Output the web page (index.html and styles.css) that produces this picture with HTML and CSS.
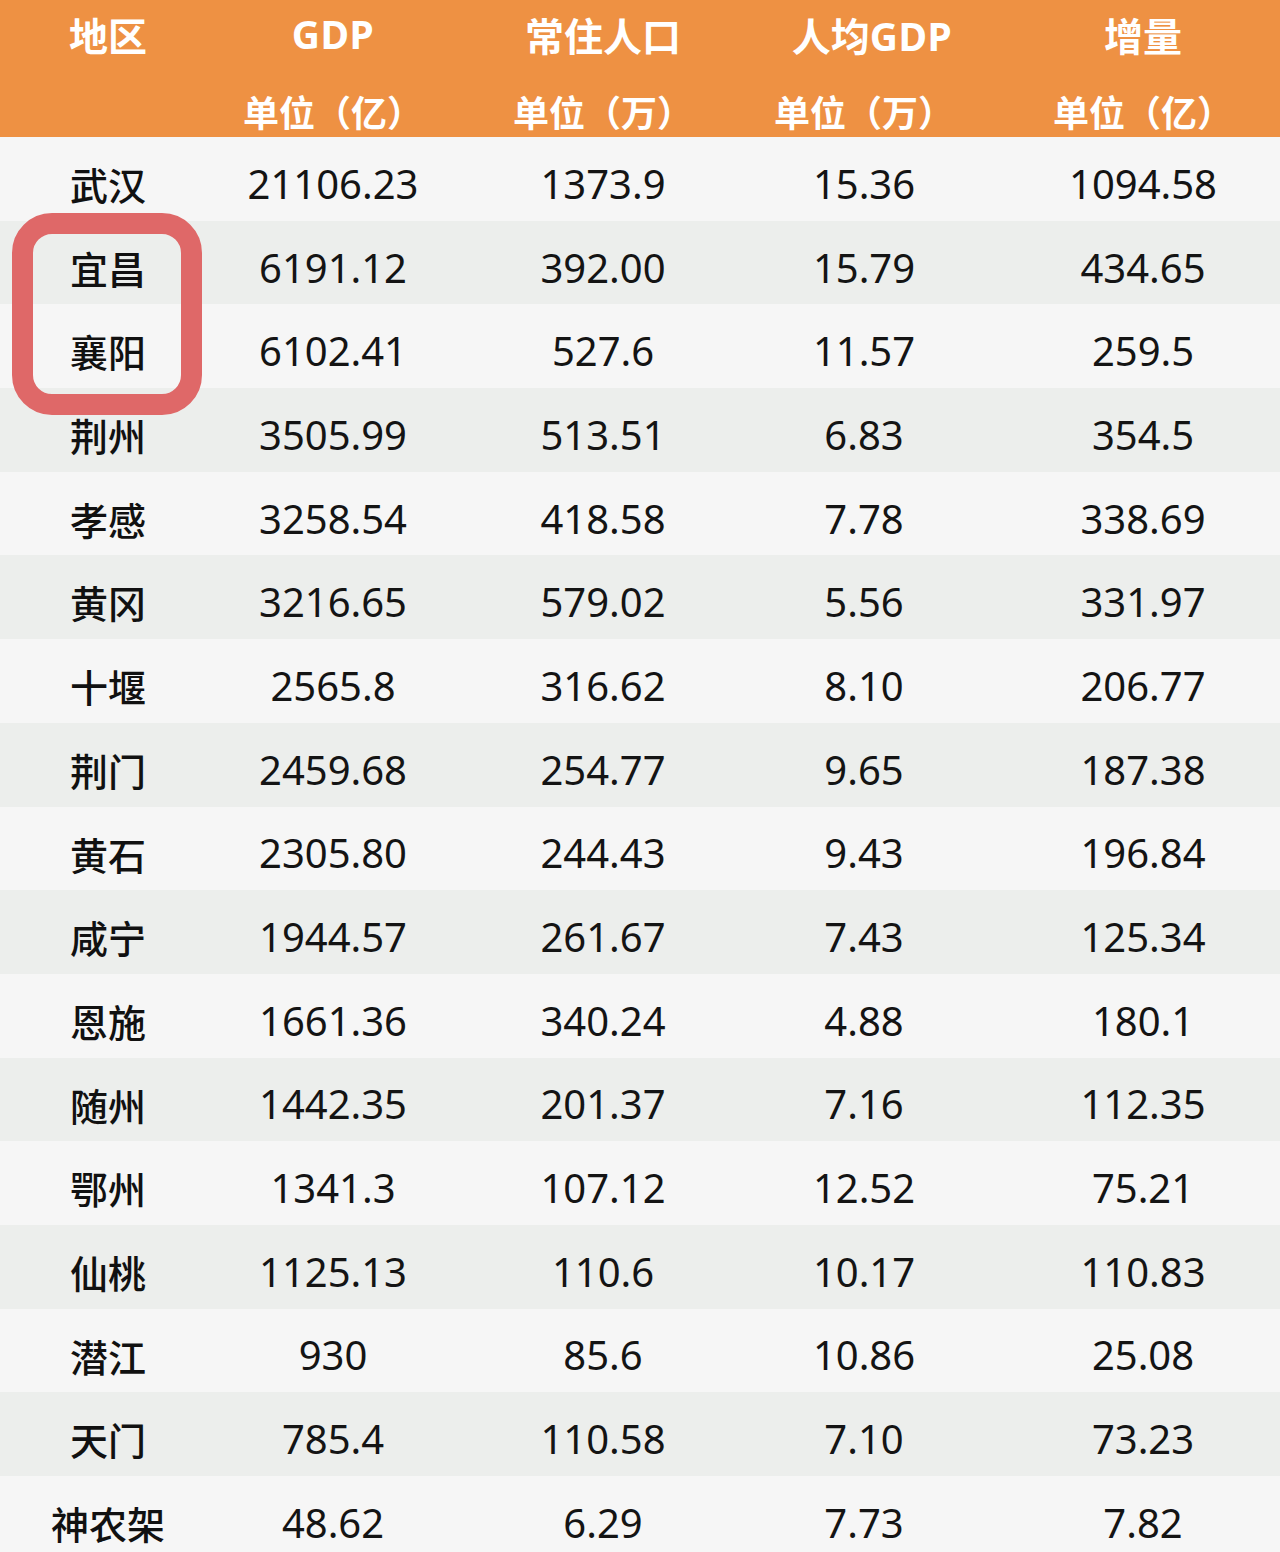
FILE: index.html
```html
<!DOCTYPE html>
<html lang="zh-CN">
<head>
<meta charset="utf-8">
<title>湖北各地区GDP</title>
<link rel="stylesheet" href="styles.css">
</head>
<body>
<div class="page">
  <div class="table">
    <div class="head">
      <div class="hcell"><div class="l1">地区</div><div class="l2"></div></div>
      <div class="hcell"><div class="l1 latin">GDP</div><div class="l2">单位（亿）</div></div>
      <div class="hcell"><div class="l1">常住人口</div><div class="l2">单位（万）</div></div>
      <div class="hcell shift"><div class="l1">人均<span class="latin">GDP</span></div><div class="l2 unshift">单位（万）</div></div>
      <div class="hcell last"><div class="l1">增量</div><div class="l2">单位（亿）</div></div>
    </div>
    <div class="row"><div class="c name">武汉</div><div class="c">21106.23</div><div class="c">1373.9</div><div class="c">15.36</div><div class="c last">1094.58</div></div>
    <div class="row alt"><div class="c name">宜昌</div><div class="c">6191.12</div><div class="c">392.00</div><div class="c">15.79</div><div class="c last">434.65</div></div>
    <div class="row"><div class="c name">襄阳</div><div class="c">6102.41</div><div class="c">527.6</div><div class="c">11.57</div><div class="c last">259.5</div></div>
    <div class="row alt"><div class="c name">荆州</div><div class="c">3505.99</div><div class="c">513.51</div><div class="c">6.83</div><div class="c last">354.5</div></div>
    <div class="row"><div class="c name">孝感</div><div class="c">3258.54</div><div class="c">418.58</div><div class="c">7.78</div><div class="c last">338.69</div></div>
    <div class="row alt"><div class="c name">黄冈</div><div class="c">3216.65</div><div class="c">579.02</div><div class="c">5.56</div><div class="c last">331.97</div></div>
    <div class="row"><div class="c name">十堰</div><div class="c">2565.8</div><div class="c">316.62</div><div class="c">8.10</div><div class="c last">206.77</div></div>
    <div class="row alt"><div class="c name">荆门</div><div class="c">2459.68</div><div class="c">254.77</div><div class="c">9.65</div><div class="c last">187.38</div></div>
    <div class="row"><div class="c name">黄石</div><div class="c">2305.80</div><div class="c">244.43</div><div class="c">9.43</div><div class="c last">196.84</div></div>
    <div class="row alt"><div class="c name">咸宁</div><div class="c">1944.57</div><div class="c">261.67</div><div class="c">7.43</div><div class="c last">125.34</div></div>
    <div class="row"><div class="c name">恩施</div><div class="c">1661.36</div><div class="c">340.24</div><div class="c">4.88</div><div class="c last">180.1</div></div>
    <div class="row alt"><div class="c name">随州</div><div class="c">1442.35</div><div class="c">201.37</div><div class="c">7.16</div><div class="c last">112.35</div></div>
    <div class="row"><div class="c name">鄂州</div><div class="c">1341.3</div><div class="c">107.12</div><div class="c">12.52</div><div class="c last">75.21</div></div>
    <div class="row alt"><div class="c name">仙桃</div><div class="c">1125.13</div><div class="c">110.6</div><div class="c">10.17</div><div class="c last">110.83</div></div>
    <div class="row"><div class="c name">潜江</div><div class="c">930</div><div class="c">85.6</div><div class="c">10.86</div><div class="c last">25.08</div></div>
    <div class="row alt"><div class="c name">天门</div><div class="c">785.4</div><div class="c">110.58</div><div class="c">7.10</div><div class="c last">73.23</div></div>
    <div class="row"><div class="c name">神农架</div><div class="c">48.62</div><div class="c">6.29</div><div class="c">7.73</div><div class="c last">7.82</div></div>
  </div>
  <div class="highlight"></div>
</div>
</body>
</html>
```
FILE: styles.css
```css
html, body {
  margin: 0;
  padding: 0;
  background: #f6f6f6;
}
.page {
  position: relative;
  width: 1280px;
  height: 1552px;
  overflow: hidden;
  font-family: "Noto Sans", "Noto Sans CJK SC", sans-serif;
  color: #141414;
}
.table {
  display: flex;
  flex-direction: column;
}
.head,
.row {
  display: grid;
  grid-template-columns: 216px 234px 306px 216px 308px;
}
.head {
  height: 137px;
  background: #ee9143;
  color: #ffffff;
  font-family: "Noto Sans CJK SC", sans-serif;
  font-weight: 700;
}
.hcell {
  display: flex;
  flex-direction: column;
  align-items: center;
}
.hcell.shift .l1 {
  padding-left: 16px;
}
.hcell.last,
.c.last {
  padding-left: 34px;
}
.l1 {
  height: 74px;
  line-height: 68px;
  font-size: 39px;
}
.l2 {
  height: 51px;
  padding-top: 12px;
  line-height: 51px;
  font-size: 36px;
}
.latin {
  font-family: "Noto Sans", sans-serif;
  font-weight: 700;
  letter-spacing: 0.5px;
}
.row {
  height: 83.7px;
  background: #f6f6f6;
}
.row.alt {
  background: #eceeec;
}
.c {
  display: flex;
  align-items: center;
  justify-content: center;
  padding-top: 10px;
  box-sizing: border-box;
  font-size: 40px;
  line-height: 1.2;
  font-weight: 400;
}
.c.name {
  font-family: "Noto Sans CJK SC", sans-serif;
  font-size: 38px;
  font-weight: 500;
  color: #111111;
}
.highlight {
  position: absolute;
  left: 12px;
  top: 213px;
  width: 190px;
  height: 202px;
  box-sizing: border-box;
  border: 21px solid #df6868;
  border-radius: 40px;
}
```
